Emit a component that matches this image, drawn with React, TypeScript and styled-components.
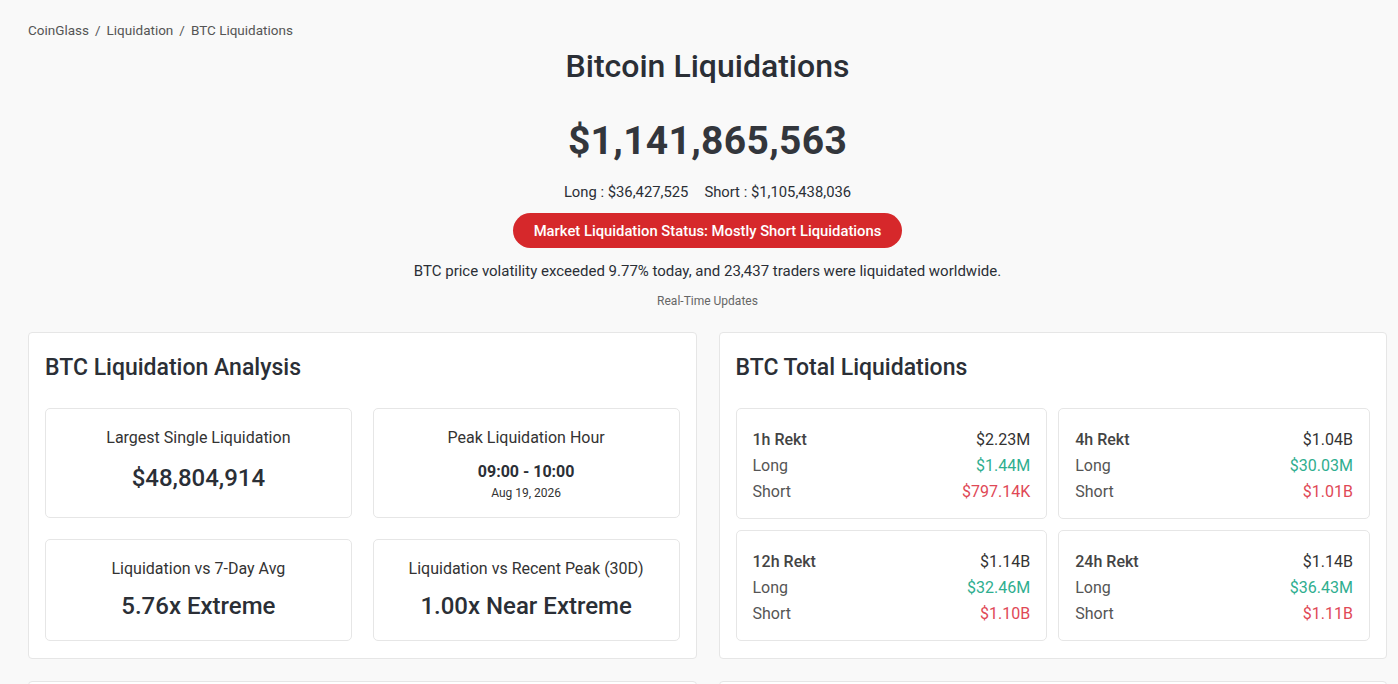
import React from "react";
import styled, {createGlobalStyle} from "styled-components";

const GlobalStyle = createGlobalStyle`
    html, body {
        margin: 0;
        padding: 0;
        background: #f9f9f9;
        font-family: Roboto, "Liberation Sans", sans-serif;
        color: #2b2f36;
    }
`;

//============ DATA ====================
const analysis = [
    {label: "Largest Single Liquidation", value: "$48,804,914"},
    {label: "Peak Liquidation Hour", value: "09:00 - 10:00", sub: "Aug 19, 2026"},
    {label: "Liquidation vs 7-Day Avg", value: "5.76x Extreme"},
    {label: "Liquidation vs Recent Peak (30D)", value: "1.00x Near Extreme"},
];

const rekt = [
    {title: "1h Rekt", total: "$2.23M", long: "$1.44M", short: "$797.14K"},
    {title: "4h Rekt", total: "$1.04B", long: "$30.03M", short: "$1.01B"},
    {title: "12h Rekt", total: "$1.14B", long: "$32.46M", short: "$1.10B"},
    {title: "24h Rekt", total: "$1.14B", long: "$36.43M", short: "$1.11B"},
];

//============ STYLES ====================
const Page = styled.div`
    padding: 20px 11px 0 28px;
    height: 684px;
    box-sizing: border-box;
    overflow: hidden;
`;

const Breadcrumb = styled.div`
    font-size: 13.5px;
    color: #555;
    line-height: 20px;
    span {
        margin: 0 6px;
    }
`;

const Hero = styled.div`
    display: flex;
    flex-direction: column;
    align-items: center;
    text-align: center;
`;

const Title = styled.h1`
    margin: 6px 0 0;
    font-size: 32px;
    font-weight: 500;
    line-height: 40px;
`;

const Total = styled.div`
    margin-top: 29px;
    font-size: 39px;
    font-weight: 700;
    line-height: 52px;
    letter-spacing: 0.3px;
    color: #33363c;
`;

const Split = styled.div`
    margin-top: 15px;
    font-size: 14.8px;
    line-height: 20px;
    display: flex;
    gap: 16px;
`;

const StatusPill = styled.div`
    margin-top: 11px;
    height: 35px;
    padding: 0 21px;
    border-radius: 18px;
    background: #d6282b;
    color: #fff;
    font-size: 14.8px;
    font-weight: 500;
    display: flex;
    align-items: center;
`;

const Note = styled.div`
    margin-top: 13px;
    font-size: 15px;
    line-height: 20px;
`;

const Small = styled.div`
    margin-top: 13px;
    font-size: 12px;
    color: #666;
    line-height: 14px;
`;

const Grid = styled.div`
    margin-top: 24px;
    display: grid;
    grid-template-columns: 1fr 1fr;
    gap: 22px;
`;

const Card = styled.div`
    background: #fff;
    border: 1px solid #e6e6e6;
    border-radius: 4px;
    padding: 20px 16px 17px;
`;

const CardTitle = styled.h2`
    margin: 0 0 25px;
    font-size: 23px;
    font-weight: 500;
    line-height: 30px;
    color: #2b2f36;
`;

const Boxes = styled.div<{ $gap: number }>`
    display: grid;
    grid-template-columns: 1fr 1fr;
    gap: ${p => p.$gap}px;
`;

const StatBox = styled.div<{ $h: number }>`
    height: ${p => p.$h}px;
    box-sizing: border-box;
    border: 1px solid #e6e6e6;
    border-radius: 5px;
    display: flex;
    flex-direction: column;
    align-items: center;
    padding-top: 19px;
`;

const StatLabel = styled.div`
    font-size: 16px;
    line-height: 20px;
    color: #333;
`;

const StatValue = styled.div<{ $top: number }>`
    margin-top: ${p => p.$top}px;
    font-size: 24px;
    font-weight: 500;
    line-height: 30px;
`;

const TimeValue = styled.div`
    margin-top: 15px;
    font-size: 16px;
    font-weight: 700;
    line-height: 18px;
`;

const DateSub = styled.div`
    margin-top: 4px;
    font-size: 12px;
    line-height: 16px;
    color: #333;
`;

const RektBox = styled.div`
    height: 111px;
    box-sizing: border-box;
    border: 1px solid #e6e6e6;
    border-radius: 5px;
    padding: 18px 16px 0;
`;

const RektRow = styled.div`
    display: flex;
    justify-content: space-between;
    font-size: 16px;
    line-height: 26px;
    color: #555;
`;

const RektTitle = styled.span`
    font-weight: 500;
    color: #444;
`;

const Amount = styled.span<{ $tone?: "up" | "down" }>`
    color: ${p => p.$tone === "up" ? "#2fae8f" : p.$tone === "down" ? "#e04856" : "#333"};
`;

//============== COMPONENT =================
const App: React.FC = () => {
    return (
        <>
            <GlobalStyle/>
            <Page>
                <Breadcrumb>
                    CoinGlass<span>/</span>Liquidation<span>/</span>BTC Liquidations
                </Breadcrumb>
                <Hero>
                    <Title>Bitcoin Liquidations</Title>
                    <Total>$1,141,865,563</Total>
                    <Split>
                        <span>Long : $36,427,525</span>
                        <span>Short : $1,105,438,036</span>
                    </Split>
                    <StatusPill>Market Liquidation Status: Mostly Short Liquidations</StatusPill>
                    <Note>BTC price volatility exceeded 9.77% today, and 23,437 traders were liquidated worldwide.</Note>
                    <Small>Real-Time Updates</Small>
                </Hero>
                <Grid>
                    <Card>
                        <CardTitle>BTC Liquidation Analysis</CardTitle>
                        <Boxes $gap={21}>
                            {analysis.map((a, i) => (
                                <StatBox key={a.label} $h={i < 2 ? 110 : 102}>
                                    <StatLabel>{a.label}</StatLabel>
                                    {a.sub ? (
                                        <>
                                            <TimeValue>{a.value}</TimeValue>
                                            <DateSub>{a.sub}</DateSub>
                                        </>
                                    ) : (
                                        <StatValue $top={i < 2 ? 15 : 12}>{a.value}</StatValue>
                                    )}
                                </StatBox>
                            ))}
                        </Boxes>
                    </Card>
                    <Card>
                        <CardTitle>BTC Total Liquidations</CardTitle>
                        <Boxes $gap={11}>
                            {rekt.map(r => (
                                <RektBox key={r.title}>
                                    <RektRow><RektTitle>{r.title}</RektTitle><Amount>{r.total}</Amount></RektRow>
                                    <RektRow><span>Long</span><Amount $tone="up">{r.long}</Amount></RektRow>
                                    <RektRow><span>Short</span><Amount $tone="down">{r.short}</Amount></RektRow>
                                </RektBox>
                            ))}
                        </Boxes>
                    </Card>
                    <Card/>
                    <Card/>
                </Grid>
            </Page>
        </>
    );
};

export default App;
